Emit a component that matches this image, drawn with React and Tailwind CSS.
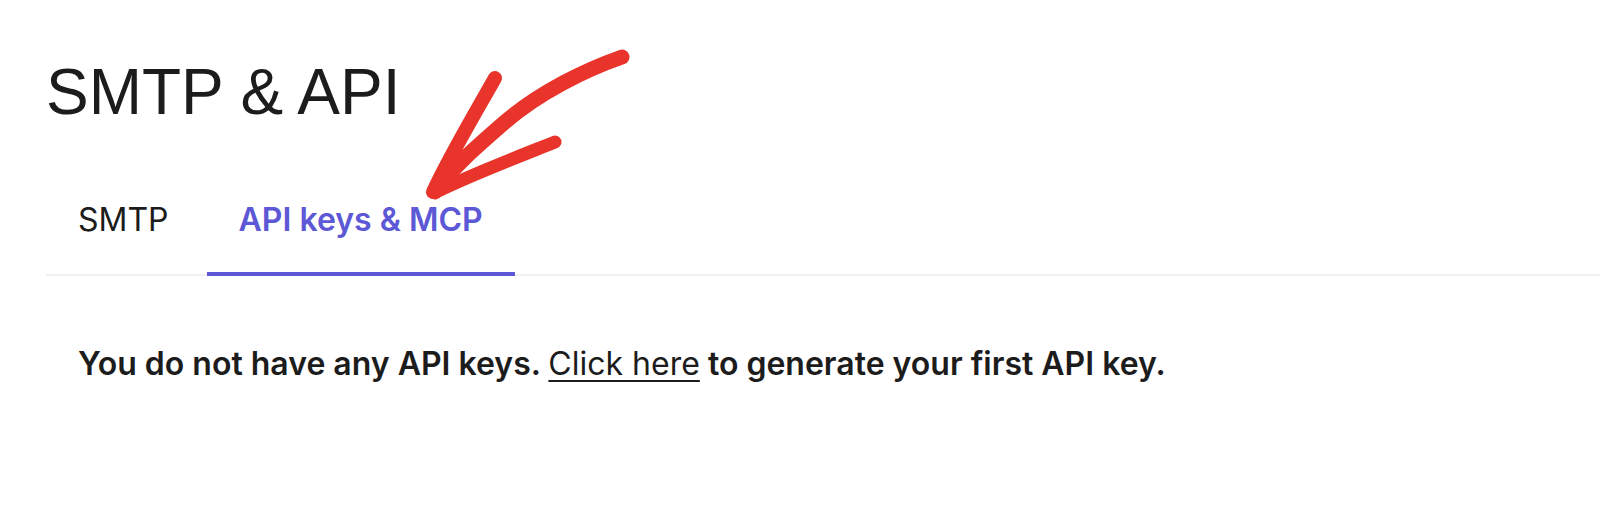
export default function App() {
  return (
    <div className="relative w-[1600px] h-[506px] overflow-hidden bg-white" style={{ fontFamily: 'Inter, "Noto Sans", sans-serif' }}>
      <div className="pl-[46px] pt-[60px]">
        <h1 className="text-[64px] leading-none font-normal text-[#1c1c1c]" style={{ fontFamily: '"Liberation Sans", Arial, sans-serif' }}>
          SMTP &amp; API
        </h1>

        {/* Tabs */}
        <div className="mt-[80px] flex items-end gap-[6px] border-b-2 border-[#f0f0f0]">
          <button className="-mb-[2px] px-8 pb-[36px] border-b-4 border-transparent text-[32px] leading-none text-[#1c1c1c]">
            SMTP
          </button>
          <button className="-mb-[2px] px-8 pb-[36px] border-b-4 border-[#5d58d6] text-[32px] leading-none font-semibold text-[#5d58d6]">
            API keys &amp; MCP
          </button>
        </div>

        <p className="mt-[72px] pl-8 text-[32px] leading-none font-semibold text-[#1c1c1c]">
          You do not have any API keys. <a className="underline font-normal underline-offset-[5px] decoration-2">Click here</a> to generate your first API key.
        </p>
      </div>

      {/* hand-drawn arrow annotation */}
      <svg className="absolute left-[400px] top-[30px]" width="240" height="180" viewBox="0 0 240 180" fill="none">
        <g stroke="#e8342a" strokeLinecap="round" strokeLinejoin="round">
          <path d="M222,27 C185,40 140,62 105,92 C75,118 52,138 35,162" strokeWidth="15" />
          <path d="M95,48 C80,75 50,125 33,162" strokeWidth="14" />
          <path d="M155,112 C120,126 70,145 36,162" strokeWidth="13" />
        </g>
      </svg>
    </div>
  );
}
